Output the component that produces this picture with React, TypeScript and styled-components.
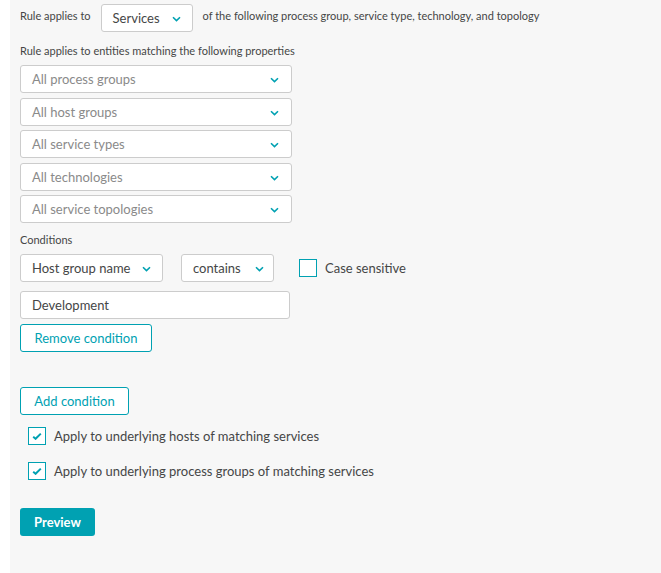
import React from "react";
import styled, { createGlobalStyle } from "styled-components";

const Global = createGlobalStyle`
  html, body { margin: 0; padding: 0; background: #ffffff; }
  body { font-family: Lato, "Open Sans", sans-serif; color: #454646; }
  * { box-sizing: border-box; }
`;

const Panel = styled.div`
  margin-left: 10px;
  background: #f7f7f7;
  min-height: 573px;
  padding: 4px 10px 20px 10px;
  display: flex;
  flex-direction: column;
`;

const TopRow = styled.div`
  display: flex;
  align-items: center;
  height: 28px;
`;

const SmallText = styled.span<{ $ml?: number; $mr?: number }>`
  font-size: 11px;
  line-height: 14px;
  color: #454646;
  margin-left: ${(p) => p.$ml ?? 0}px;
  margin-right: ${(p) => p.$mr ?? 0}px;
  padding-bottom: 5px;
  white-space: nowrap;
`;

const SectionLabel = styled.div<{ $mt: number; $mb: number }>`
  font-size: 11px;
  line-height: 14px;
  color: #454646;
  margin-top: ${(p) => p.$mt}px;
  margin-bottom: ${(p) => p.$mb}px;
`;

const Select = styled.div<{ $w: number; $placeholder?: boolean; $gapChev?: number }>`
  width: ${(p) => p.$w}px;
  height: 28px;
  flex: none;
  background: #ffffff;
  border: 1px solid #cccccc;
  border-radius: 3px;
  display: flex;
  align-items: center;
  justify-content: ${(p) => (p.$gapChev !== undefined ? "flex-start" : "space-between")};
  padding: 0 12px 0 11px;
  font-size: 13px;
  color: ${(p) => (p.$placeholder ? "#8a8a8a" : "#454646")};
  white-space: nowrap;
`;

const ChevronWrap = styled.span<{ $ml?: number }>`
  display: inline-flex;
  margin-left: ${(p) => p.$ml ?? 0}px;
  margin-top: 2px;
`;

const Chevron = ({ ml }: { ml?: number }) => (
  <ChevronWrap $ml={ml}>
    <svg width="9" height="6" viewBox="0 0 9 6">
      <path d="M1 1.2 L4.5 4.6 L8 1.2" fill="none" stroke="#00a1b2" strokeWidth="1.6" />
    </svg>
  </ChevronWrap>
);

const SelectStack = styled.div`
  display: flex;
  flex-direction: column;
  gap: 4.5px;
`;

const CondRow = styled.div`
  display: flex;
  align-items: center;
  gap: 18px;
`;

const CheckLabel = styled.label<{ $ml?: number }>`
  display: flex;
  align-items: center;
  gap: 8px;
  margin-left: ${(p) => p.$ml ?? 0}px;
  font-size: 13px;
  color: #454646;
`;

const Box = styled.span`
  width: 18px;
  height: 18px;
  border: 1px solid #00a1b2;
  background: #ffffff;
  display: inline-flex;
  align-items: center;
  justify-content: center;
  flex: none;
`;

const Check = ({ checked }: { checked?: boolean }) => (
  <Box>
    {checked && (
      <svg width="10" height="8" viewBox="0 0 10 8">
        <path d="M1.2 4.8 L3.6 6.8 L8.8 1.6" fill="none" stroke="#00a1b2" strokeWidth="2" />
      </svg>
    )}
  </Box>
);

const TextInput = styled.div`
  width: 270px;
  height: 28px;
  background: #ffffff;
  border: 1px solid #cccccc;
  border-radius: 3px;
  display: flex;
  align-items: center;
  padding: 0 12px 0 11px;
  font-size: 13px;
  color: #454646;
  margin-top: 9px;
`;

const OutlineButton = styled.button<{ $w: number; $mt: number }>`
  width: ${(p) => p.$w}px;
  height: 28px;
  margin-top: ${(p) => p.$mt}px;
  background: #ffffff;
  border: 1px solid #00a1b2;
  border-radius: 3px;
  color: #00a1b2;
  font-family: inherit;
  font-size: 13px;
  padding: 0;
  align-self: flex-start;
`;

const PrimaryButton = styled.button`
  width: 75px;
  height: 28px;
  margin-top: 28px;
  background: #00a1b2;
  border: none;
  border-radius: 3px;
  color: #ffffff;
  font-family: inherit;
  font-weight: 700;
  font-size: 13px;
  padding: 0;
  align-self: flex-start;
`;

const CheckList = styled.div`
  display: flex;
  flex-direction: column;
  gap: 17px;
  margin-top: 12px;
`;

export default function App() {
  const props = [
    "All process groups",
    "All host groups",
    "All service types",
    "All technologies",
    "All service topologies",
  ];
  return (
    <>
      <Global />
      <Panel>
        <TopRow>
          <SmallText $mr={10}>Rule applies to</SmallText>
          <Select $w={92} $gapChev={0}>
            Services
            <Chevron ml={12} />
          </Select>
          <SmallText $ml={10}>of the following process group, service type, technology, and topology</SmallText>
        </TopRow>
        <SectionLabel $mt={12} $mb={7}>Rule applies to entities matching the following properties</SectionLabel>
        <SelectStack>
          {props.map((p) => (
            <Select key={p} $w={272} $placeholder>
              {p}
              <Chevron />
            </Select>
          ))}
        </SelectStack>
        <SectionLabel $mt={10} $mb={7}>Conditions</SectionLabel>
        <CondRow>
          <Select $w={143} $gapChev={0}>
            Host group name
            <Chevron ml={12} />
          </Select>
          <Select $w={93} $gapChev={0}>
            contains
            <Chevron ml={14} />
          </Select>
          <CheckLabel $ml={7}>
            <Check />
            Case sensitive
          </CheckLabel>
        </CondRow>
        <TextInput>Development</TextInput>
        <OutlineButton $w={132} $mt={5}>Remove condition</OutlineButton>
        <OutlineButton $w={109} $mt={35}>Add condition</OutlineButton>
        <CheckList>
          <CheckLabel $ml={8}>
            <Check checked />
            Apply to underlying hosts of matching services
          </CheckLabel>
          <CheckLabel $ml={8}>
            <Check checked />
            Apply to underlying process groups of matching services
          </CheckLabel>
        </CheckList>
        <PrimaryButton>Preview</PrimaryButton>
      </Panel>
    </>
  );
}
